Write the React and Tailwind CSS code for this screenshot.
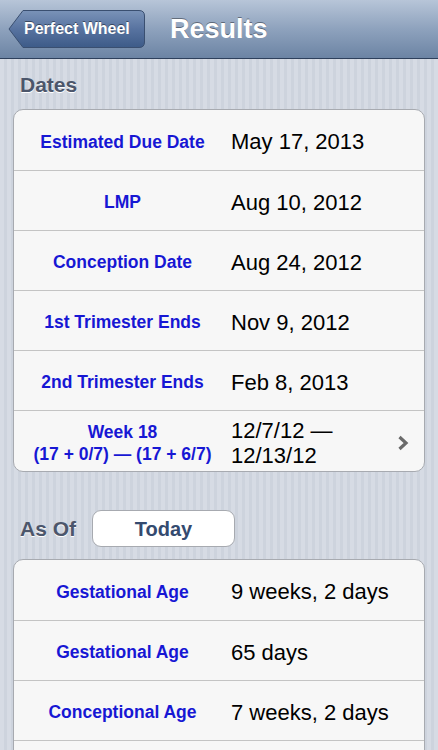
import React from "react";

const font = { fontFamily: '"Liberation Sans", Arial, sans-serif' };

const dates = [
  { label: "Estimated Due Date", value: "May 17, 2013" },
  { label: "LMP", value: "Aug 10, 2012" },
  { label: "Conception Date", value: "Aug 24, 2012" },
  { label: "1st Trimester Ends", value: "Nov 9, 2012" },
  { label: "2nd Trimester Ends", value: "Feb 8, 2013" },
];

const ages = [
  { label: "Gestational Age", value: "9 weeks, 2 days" },
  { label: "Gestational Age", value: "65 days" },
  { label: "Conceptional Age", value: "7 weeks, 2 days" },
  { label: "", value: "" },
];

function Row({ label, value, last, first, children }) {
  return (
    <div
      className={`flex items-center pt-[3px] ${first ? "h-[61px]" : "h-[60px]"} ${last ? "" : "border-b border-[#c4c4c4]"}`}
    >
      <div className="w-[217px] text-center font-bold text-[17.5px] text-[#1717d4] leading-[22px]">{label}</div>
      <div className="flex-1 text-[22px] text-black leading-[25px]">{value}</div>
      {children}
    </div>
  );
}

function BackButton() {
  return (
    <div className="relative w-[138px] h-[40px]">
      <svg width="138" height="40" viewBox="0 0 138 40" className="absolute inset-0">
        <defs>
          <linearGradient id="bb" x1="0" y1="0" x2="0" y2="1">
            <stop offset="0" stopColor="#7a93b8" />
            <stop offset="0.5" stopColor="#5873a0" />
            <stop offset="1" stopColor="#3d5b88" />
          </linearGradient>
        </defs>
        <path
          d="M1 20 L15 1.5 L131 1.5 Q136.5 1.5 136.5 7 L136.5 33 Q136.5 38.5 131 38.5 L15 38.5 Z"
          fill="url(#bb)"
          stroke="#3a4f70"
          strokeWidth="1"
        />
      </svg>
      <div className="absolute inset-0 flex items-center pl-[16px] text-white font-bold text-[16px] [text-shadow:0_-1px_0_rgba(0,0,0,0.45)]">
        Perfect Wheel
      </div>
    </div>
  );
}

export default function App() {
  return (
    <div
      style={font}
      className="w-[438px] h-[750px] overflow-hidden bg-[repeating-linear-gradient(90deg,#d6dbe4_0px,#d6dbe4_4px,#cdd3dd_4px,#cdd3dd_7px)]"
    >
      <div className="h-[59px] flex items-center gap-[24px] pl-[8px] bg-[linear-gradient(#b7c5d8,#8ea2bd_50%,#6c84a4)] border-b border-[#2e405c]">
        <BackButton />
        <h1 className="text-white font-bold text-[27px] [text-shadow:0_-1px_0_rgba(0,0,0,0.4)]">Results</h1>
      </div>

      <div className="px-[13px]">
        <h2 className="pl-[7px] pt-[13px] pb-[12px] text-[21px] font-bold text-[#4c566b] leading-[25px] [text-shadow:0_1px_0_#ffffff]">
          Dates
        </h2>
        <div className="bg-[#f7f7f7] border border-[#a7aab0] rounded-[10px] overflow-hidden">
          {dates.map((d, i) => (
            <Row key={d.label} first={i === 0} label={d.label} value={d.value} />
          ))}
          <Row
            last
            label={
              <>
                Week 18
                <br />
                (17 + 0/7) — (17 + 6/7)
              </>
            }
            value={
              <>
                12/7/12 —
                <br />
                12/13/12
              </>
            }
          >
            <svg width="12" height="16" viewBox="0 0 12 16" className="mr-[15px]">
              <path d="M2.5 2 L9 8 L2.5 14" fill="none" stroke="#6b6b6b" strokeWidth="3.2" />
            </svg>
          </Row>
        </div>

        <div className="flex items-center gap-[16px] pt-[38px] pb-[12px]">
          <span className="pl-[7px] text-[21px] font-bold text-[#4c566b] [text-shadow:0_1px_0_#ffffff]">As Of</span>
          <div className="w-[143px] h-[37px] bg-white border border-[#a7aab0] rounded-[9px] flex items-center justify-center text-[20px] font-bold text-[#344a6f]">
            Today
          </div>
        </div>

        <div className="bg-[#f7f7f7] border border-[#a7aab0] rounded-[10px] overflow-hidden">
          {ages.map((d, i) => (
            <Row key={i} first={i === 0} label={d.label} value={d.value} />
          ))}
        </div>
      </div>
    </div>
  );
}
